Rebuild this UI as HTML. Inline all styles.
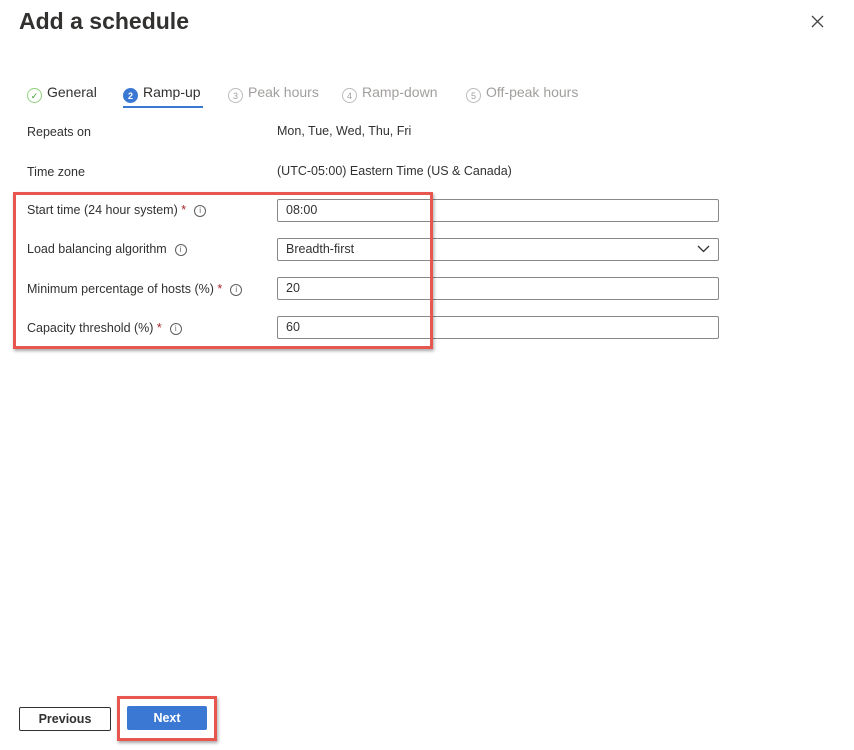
<!DOCTYPE html>
<html><head><style>
body{margin:0;width:854px;height:750px;background:#fff;font-family:"Liberation Sans",sans-serif;color:#323130;position:relative;overflow:hidden}
.a{position:absolute}
.t{font-size:12.5px}
.in{position:absolute;left:277px;height:21px;border:1px solid #8a8886;border-radius:2px;font-size:12.5px;line-height:21px;padding-left:8px;box-sizing:content-box;width:432px}
.i{display:inline-block;width:10px;height:10px;border:1px solid #605e5c;border-radius:50%;font-size:8px;line-height:10px;text-align:center;color:#605e5c;vertical-align:1px;margin-left:8px}
.r{color:#a4262c}
.c{display:inline-block;width:15px;height:15px;border-radius:50%;border:1px solid #bbb;font-size:9px;line-height:15px;text-align:center;color:#a19f9d;margin-right:5px;vertical-align:-2px;box-sizing:border-box}
</style></head><body>
<div class="a" style="left:19px;top:8px;font-size:23px;font-weight:bold;color:#323130">Add a schedule</div>
<svg class="a" style="left:811px;top:15px" width="13" height="13" viewBox="0 0 13 13"><path d="M1 1l11 11M12 1L1 12" stroke="#444" stroke-width="1.3"/></svg>
<div class="a" style="top:84px;left:27px;font-size:14px;white-space:nowrap">
<span class="a" style="left:0"><span class="c" style="border-color:#8fd07c;color:#3a9e2a">✓</span>General</span>
<span class="a" style="left:96px"><span class="c" style="background:#3b78d4;border-color:#3b78d4;color:#fff;font-weight:bold">2</span>Ramp-up</span>
<span class="a" style="left:201px;color:#a19f9d"><span class="c">3</span>Peak hours</span>
<span class="a" style="left:315px;color:#a19f9d"><span class="c">4</span>Ramp-down</span>
<span class="a" style="left:439px;color:#a19f9d"><span class="c">5</span>Off-peak hours</span>
</div>
<div class="a" style="left:123px;top:106px;width:80px;height:2px;background:#3b78d4"></div>
<div class="a t" style="left:27px;top:125px">Repeats on</div>
<div class="a t" style="left:277px;top:124px">Mon, Tue, Wed, Thu, Fri</div>
<div class="a t" style="left:27px;top:165px">Time zone</div>
<div class="a t" style="left:277px;top:164px">(UTC-05:00) Eastern Time (US &amp; Canada)</div>
<div class="a t" style="left:27px;top:203px">Start time (24 hour system) <span class="r">*</span><span class="i">i</span></div>
<div class="a t" style="left:27px;top:242px">Load balancing algorithm<span class="i">i</span></div>
<div class="a t" style="left:27px;top:282px">Minimum percentage of hosts (%) <span class="r">*</span><span class="i">i</span></div>
<div class="a t" style="left:27px;top:321px">Capacity threshold (%) <span class="r">*</span><span class="i">i</span></div>
<div class="in" style="top:199px">08:00</div>
<div class="in" style="top:238px">Breadth-first<svg style="position:absolute;right:8px;top:6px" width="13" height="8" viewBox="0 0 13 8"><path d="M1 1l5.5 5.5L12 1" fill="none" stroke="#323130" stroke-width="1.3"/></svg></div>
<div class="in" style="top:277px">20</div>
<div class="in" style="top:316px">60</div>
<div class="a" style="left:13px;top:192px;width:414px;height:151px;border:3px solid #e8574f;box-shadow:1px 2px 3px rgba(0,0,0,.35)"></div>
<div class="a" style="left:19px;top:707px;width:90px;height:22px;border:1px solid #323130;border-radius:2px;font-size:12.5px;font-weight:bold;text-align:center;line-height:22px">Previous</div>
<div class="a" style="left:117px;top:696px;width:94px;height:39px;border:3px solid #e8574f;box-shadow:1px 2px 3px rgba(0,0,0,.35)"></div>
<div class="a" style="left:127px;top:706px;width:80px;height:24px;background:#3b78d4;border-radius:2px;color:#fff;font-size:12.5px;font-weight:bold;text-align:center;line-height:24px">Next</div>
</body></html>
